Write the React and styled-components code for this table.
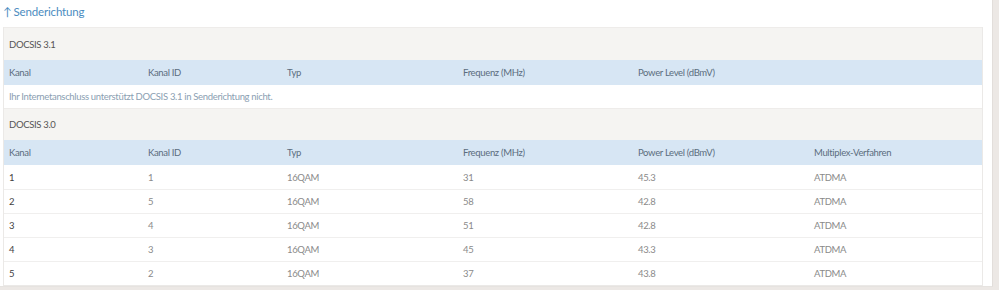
import React from "react";
import styled, { createGlobalStyle } from "styled-components";

const Global = createGlobalStyle`
  html, body { margin: 0; padding: 0; }
  body {
    background: #ece8e5;
    font-family: "Lato", "Open Sans", sans-serif;
    width: 999px;
    height: 290px;
    overflow: hidden;
  }
`;

const Panel = styled.div`
  width: 993px;
  height: 287px;
  box-sizing: border-box;
  background: #ffffff;
  border-right: 1px solid #e2dedb;
  border-bottom: 1px solid #e6e3e0;
  padding: 0 9px 0 3px;
`;

const Title = styled.h2`
  margin: 0;
  height: 27px;
  display: flex;
  align-items: center;
  gap: 2px;
  font-size: 11.5px;
  letter-spacing: -0.15px;
  font-weight: 400;
  color: #4b8cbf;
  padding-bottom: 4px;
  box-sizing: border-box;
`;

const Table = styled.div`
  border: 1px solid #ebe9e7;
  border-top: none;
  display: flex;
  flex-direction: column;
  font-size: 9.5px;
  letter-spacing: -0.33px;
`;

const cols = "139px 139px 176px 175px 176px 1fr";

const Section = styled.div`
  height: ${(p) => p.$h}px;
  box-sizing: border-box;
  background: #f5f4f2;
  display: flex;
  align-items: center;
  padding-left: 5px;
  color: #555;
  border-top: 1px solid #eeecea;
`;

const HeadRow = styled.div`
  display: grid;
  grid-template-columns: ${cols};
  height: 25px;
  align-items: center;
  background: #d7e6f4;
  color: #5b6d7e;
`;

const Row = styled.div`
  display: grid;
  grid-template-columns: ${cols};
  height: 24px;
  align-items: center;
  background: #fff;
  color: #8a8a8a;
  border-top: ${(p) => (p.$first ? "none" : "1px solid #f0efee")};
  box-sizing: border-box;
`;

const Cell = styled.div`
  padding-left: 5px;
  white-space: nowrap;
  color: ${(p) => (p.$strong ? "#3f3f3f" : "inherit")};
`;

const Message = styled.div`
  height: 23px;
  display: flex;
  align-items: center;
  padding-left: 5px;
  color: #8ba0b2;
  background: #fff;
`;

const headers31 = ["Kanal", "Kanal ID", "Typ", "Frequenz (MHz)", "Power Level (dBmV)", ""];
const headers30 = ["Kanal", "Kanal ID", "Typ", "Frequenz (MHz)", "Power Level (dBmV)", "Multiplex-Verfahren"];

const data = [
  ["1", "1", "16QAM", "31", "45.3", "ATDMA"],
  ["2", "5", "16QAM", "58", "42.8", "ATDMA"],
  ["3", "4", "16QAM", "51", "42.8", "ATDMA"],
  ["4", "3", "16QAM", "45", "43.3", "ATDMA"],
  ["5", "2", "16QAM", "37", "43.8", "ATDMA"],
];

export default function App() {
  return (
    <>
      <Global />
      <Panel>
        <Title>
          <span>↑</span>
          <span>Senderichtung</span>
        </Title>
        <Table>
          <Section $h={33}>DOCSIS 3.1</Section>
          <HeadRow>
            {headers31.map((h, i) => (
              <Cell key={i}>{h}</Cell>
            ))}
          </HeadRow>
          <Message>Ihr Internetanschluss unterstützt DOCSIS 3.1 in Senderichtung nicht.</Message>
          <Section $h={32}>DOCSIS 3.0</Section>
          <HeadRow>
            {headers30.map((h, i) => (
              <Cell key={i}>{h}</Cell>
            ))}
          </HeadRow>
          {data.map((r, i) => (
            <Row key={i} $first={i === 0}>
              {r.map((c, j) => (
                <Cell key={j} $strong={j === 0}>
                  {c}
                </Cell>
              ))}
            </Row>
          ))}
        </Table>
      </Panel>
    </>
  );
}
